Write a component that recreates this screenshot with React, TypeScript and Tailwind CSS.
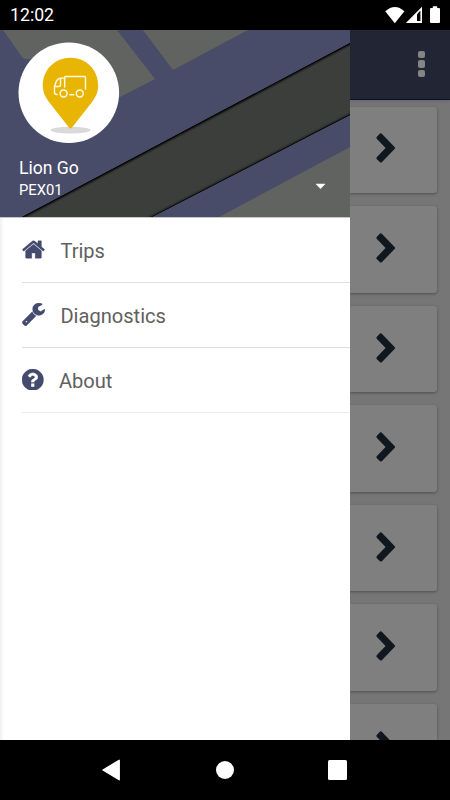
const menuItems = [
  {
    id: 'trips',
    label: 'Trips',
    viewBox: '0 128 1664 1536',
    width: 23,
    height: 21,
    path: 'M1408 992v480q0 26-19 45t-45 19h-384v-384h-256v384h-384q-26 0-45-19t-19-45v-480q0-1 .5-3t.5-3l575-474 575 474q1 2 1 6zm223-69l-62 74q-8 9-21 11h-3q-13 0-21-7l-692-577-692 577q-12 8-24 7-13-2-21-11l-62-74q-8-10-7-23.5t11-21.5l719-599q32-26 76-26t76 26l244 204v-195q0-14 9-23t23-9h192q14 0 23 9t9 23v408l219 182q10 8 11 21.5t-7 23.5z',
  },
  {
    id: 'diagnostics',
    label: 'Diagnostics',
    viewBox: '0 128 1664 1664',
    width: 23,
    height: 23,
    path: 'M384 1472q0-26-19-45t-45-19-45 19-19 45 19 45 45 19 45-19 19-45zm644-420l-682 682q-37 37-90 37-52 0-91-37l-106-108q-38-36-38-90 0-53 38-91l681-681q39 98 114.500 173.500t173.500 114.500zm634-435q0 39-23 106-47 134-164.500 217.500t-258.500 83.500q-185 0-316.500-131.500t-131.500-316.500 131.500-316.500 316.500-131.500q58 0 121.500 16.500t107.500 46.500q16 11 16 28t-16 28l-293 169v224l193 107q5-3 79-48.500t135.500-81 70.500-35.500q15 0 23.500 10t8.500 25z',
  },
  {
    id: 'about',
    label: 'About',
    viewBox: '0 128 1536 1536',
    width: 21.5,
    height: 21.5,
    path: 'M896 1376v-192q0-14-9-23t-23-9h-192q-14 0-23 9t-9 23v192q0 14 9 23t23 9h192q14 0 23-9t9-23zm256-672q0-88-55.500-163t-138.500-116-170-41q-243 0-371 213-15 24 8 42l132 100q7 6 19 6 16 0 25-12 53-68 86-92 34-24 86-24 48 0 85.500 26t37.500 59q0 38-20 61t-68 45q-63 28-115.500 86.500t-52.500 125.500v36q0 14 9 23t23 9h192q14 0 23-9t9-23q0-19 21.500-49.500t54.500-49.500q32-18 49-28.500t46-35 44.500-48 28-60.500 12.500-81zm384 192q0 209-103 385.500t-279.500 279.500-385.500 103-385.500-103-279.500-279.500-103-385.500 103-385.500 279.500-279.500 385.500-103 385.500 103 279.500 279.500 103 385.500z',
  },
];

const cards = [1, 2, 3, 4, 5, 6, 7];

function StatusBar() {
  return (
    <div className="h-[30px] shrink-0 bg-black flex items-center justify-between pl-[10px]">
      <span className="text-white text-[17.7px] leading-none pt-[2px]">12:02</span>
      <svg width="70" height="30" viewBox="380 0 70 30" fill="#fff">
        <path d="M385.2 11.3 Q395 2.8 404.4 11.3 L394.8 23.2 Z" />
        <path d="M405.8 23 L422 6.8 V23 Z" />
        <path d="M417 14.2 L420.4 10.6 V21 H417 Z" fill="#000" />
        <path d="M432.8 6.3 h4.4 v1.7 h1.8 q1 0 1 1 V22 q0 1 -1 1 h-8 q-1 0 -1 -1 V9 q0 -1 1 -1 h1.8 Z" />
      </svg>
    </div>
  );
}

function HeaderArt() {
  return (
    <svg className="absolute inset-0" width="350" height="187" viewBox="0 30 350 187">
      <defs>
        <filter id="soft" x="-5%" y="-5%" width="110%" height="110%">
          <feGaussianBlur stdDeviation="1.3" />
        </filter>
        <clipPath id="road">
          <path d="M22 217 L350 43 V115 L152 217 Z" />
        </clipPath>
      </defs>
      <rect y="30" width="350" height="187" fill="#484c68" />
      <path d="M3 30 L22 57 Q25 61 33 58 L70 110 L95 110 L155 79 L117 30 Z" fill="#616361" />
      <path d="M143 30 L173 70 L248 30 Z" fill="#616361" />
      <path d="M219 217 L350 147 V217 Z" fill="#616361" />
      <path d="M22 217 L350 43 V115 L152 217 Z" fill="#3c3e3c" />
      <g clipPath="url(#road)" stroke="#000" fill="none">
        <path d="M10 223.4 L360 37.7" strokeWidth="3" filter="url(#soft)" />
        <path d="M140 223.2 L360 109.8" strokeWidth="2.5" filter="url(#soft)" opacity="0.6" />
        <path d="M10 223.4 L360 37.7 M140 223.2 L360 109.8" strokeWidth="1.2" />
      </g>
    </svg>
  );
}

function Avatar() {
  return (
    <svg width="102" height="102" viewBox="18 41.5 102 102">
      <circle cx="68.8" cy="92.3" r="50.3" fill="#fff" />
      <ellipse cx="70.5" cy="129.6" rx="20" ry="3.4" fill="#d9d9d9" />
      <path
        d="M42.8 85 C42.8 69 55 57.2 70.5 57.2 C86 57.2 98.2 69 98.2 85 C98.2 92 95.5 97 91.5 102.3 L72 127 Q70.5 129 69 127 L49.5 102.3 C45.5 97 42.8 92 42.8 85 Z"
        fill="#e9b505"
      />
      <g fill="none" stroke="#fffbe8" strokeWidth="1.4" strokeLinecap="round" strokeLinejoin="round">
        <path d="M64.7 86.5 V77 Q64.7 76 65.7 76 H84.5 Q85.5 76 85.5 77 V88.5" />
        <path d="M64.5 77.6 H60.5 Q57.5 78 56 81.5 L54.5 86 V92 Q54.5 94 57 94" />
        <path d="M55.2 86 H58.8 Q60.5 86 60.5 84 V78" />
        <circle cx="63.6" cy="93" r="3.5" />
        <circle cx="79.8" cy="93" r="3.5" />
        <path d="M69.8 94.3 H73.8" />
      </g>
    </svg>
  );
}

function Drawer() {
  return (
    <div className="w-[350px] h-full shrink-0 bg-white flex flex-col">
      <div className="relative h-[187px] shrink-0">
        <HeaderArt />
        <div className="relative h-full pl-[18px] pt-[11.5px]">
          <Avatar />
          <div className="flex justify-between pr-[24px] pt-[13px] text-white">
            <div className="pl-[1px]">
              <div className="text-[17.6px] leading-[22px]">Lion Go</div>
              <div className="text-[14.8px] leading-[22px]">PEX01</div>
            </div>
            <svg className="mt-[26px]" width="11" height="7" viewBox="0 0 11 7">
              <path d="M1 1 H10 L5.5 5.8 Z" fill="#fff" stroke="#fff" strokeWidth="0.5" />
            </svg>
          </div>
        </div>
      </div>
      <div className="flex-1 border-t border-[#c6c6c6] bg-linear-to-r from-[#f0f0f0] to-white to-[4px]">
        {menuItems.map((item) => (
          <div key={item.id} className="h-[65px] ml-[22px] pl-[0.4px] flex items-center gap-[15px] border-b border-[#dedede] last:border-[#ececec]">
            <svg className="mb-[1px]" width={item.width} height={item.height} viewBox={item.viewBox} fill="#454b6c" stroke="#1c2358" strokeWidth="20">
              <path d={item.path} />
            </svg>
            <span className="text-[20.1px] pt-[2px] text-[#606060]">{item.label}</span>
          </div>
        ))}
      </div>
    </div>
  );
}

function TripList() {
  return (
    <div className="flex-1 h-full bg-[#767676] flex flex-col overflow-hidden">
      <div className="h-[69.5px] shrink-0 bg-[#222534] border-b border-[#0e1030] shadow-[0_1px_4px_rgba(0,0,0,0.15)] flex flex-col items-end justify-center gap-[2px] pr-[25px] pb-[1px]">
        <span className="w-[7px] h-[7.5px] rounded-[2px] bg-[#858585]" />
        <span className="w-[7px] h-[7.5px] rounded-[2px] bg-[#858585]" />
        <span className="w-[7px] h-[7.5px] rounded-[2px] bg-[#858585]" />
      </div>
      <div className="flex flex-col gap-[13px] pt-[7px] pr-[13px]">
        {cards.map((id) => (
          <div key={id} className="h-[86.6px] shrink-0 rounded-r-[3px] bg-[#7f7f7f] shadow-[0_1px_3px_rgba(0,0,0,0.35)] flex items-center pl-[25.6px] pb-[2.8px]">
            <svg width="20" height="30" viewBox="0 0 20 30">
              <path d="M4 0.6 Q5 0 5.8 0.8 L18.8 14.2 Q19.5 15 18.8 15.8 L5.8 29.2 Q5 30 4 29.2 L0.7 26 Q0 25.2 0.7 24.3 L9.6 15 L0.7 5.7 Q0 4.8 0.7 4 Z" fill="#10171f" />
            </svg>
          </div>
        ))}
      </div>
    </div>
  );
}

function NavBar() {
  return (
    <div className="h-[60px] shrink-0 bg-black flex items-center justify-between pl-[101px] pr-[103px]">
      <svg width="20" height="22" viewBox="0 0 20 22">
        <path d="M18.2 1.3 V20.7 L2 11 Z" fill="#fff" stroke="#fff" strokeWidth="1.4" strokeLinejoin="round" />
      </svg>
      <span className="w-[18px] h-[18px] rounded-full bg-white" />
      <span className="w-[19px] h-[19.5px] rounded-[1.5px] bg-white" />
    </div>
  );
}

export default function App() {
  return (
    <div className="w-[450px] h-[800px] flex flex-col overflow-hidden font-[Roboto,sans-serif]">
      <StatusBar />
      <div className="h-[710px] flex overflow-hidden">
        <Drawer />
        <TripList />
      </div>
      <NavBar />
    </div>
  );
}
